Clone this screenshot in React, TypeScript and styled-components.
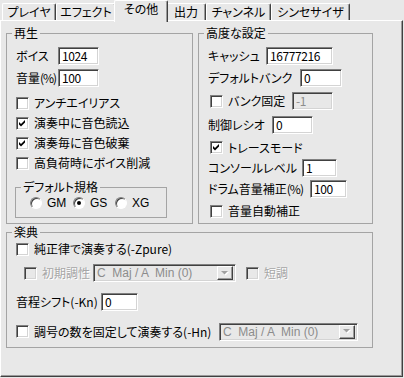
import React from "react";
import styled, { createGlobalStyle } from "styled-components";

const FACE = "#e8e8e8";

const Global = createGlobalStyle`
  html, body { margin: 0; padding: 0; background: ${FACE}; }
  body {
    font-family: "Noto Sans CJK JP", "Noto Sans", sans-serif;
    font-size: 12px;
    line-height: 14px;
    font-feature-settings: "palt";
    color: #000;
  }
`;

const Window = styled.div`
  width: 404px;
  height: 378px;
  background: ${FACE};
  overflow: hidden;
`;

const TabStrip = styled.div`
  display: flex;
  align-items: flex-end;
  height: 20px;
  padding-left: 2px;
`;

const Tab = styled.div<{ $w: number; $active?: boolean }>`
  box-sizing: border-box;
  flex: none;
  width: ${(p) => (p.$active ? p.$w + 4 : p.$w)}px;
  height: ${(p) => (p.$active ? 22 : 17)}px;
  margin: ${(p) => (p.$active ? "0 -2px -2px" : "0")};
  position: ${(p) => (p.$active ? "relative" : "static")};
  z-index: ${(p) => (p.$active ? 1 : "auto")};
  background: ${FACE};
  border: 1px solid #fff;
  border-bottom: none;
  border-right-color: #404040;
  border-radius: 2px 2px 0 0;
  box-shadow: inset -1px 0 #9a9a9a;
  display: flex;
  justify-content: center;
  align-items: flex-start;
  padding-top: 1px;
  white-space: nowrap;
`;

const Panel = styled.div`
  box-sizing: border-box;
  width: 403px;
  height: 357px;
  border: 1px solid #fff;
  border-right-color: #404040;
  border-bottom-color: #404040;
  box-shadow: inset -1px -1px #9a9a9a;
  padding: 5px 0 0 5px;
  display: flex;
  flex-direction: column;
  gap: 1px;
`;

const TopRow = styled.div`
  display: flex;
  gap: 5px;
`;

const Group = styled.fieldset<{ $w: number; $h: number }>`
  box-sizing: border-box;
  flex: none;
  margin: 0;
  min-width: 0;
  width: ${(p) => p.$w}px;
  height: ${(p) => p.$h}px;
  border: 1px solid #a4a4a4;
  padding: 0 8px;
  display: flex;
  flex-direction: column;
`;

const Legend = styled.legend`
  padding: 0 2px;
  margin-left: -3px;
  height: 14px;
  line-height: 14px;
  white-space: nowrap;
`;

const SubGroup = styled(Group)`
  margin-top: 7px;
`;

const Row = styled.div<{ $h: number; $mt?: number }>`
  display: flex;
  align-items: center;
  flex: none;
  height: ${(p) => p.$h}px;
  margin-top: ${(p) => p.$mt ?? 0}px;
`;

const FieldLabel = styled.span<{ $w: number }>`
  flex: none;
  width: ${(p) => p.$w}px;
  white-space: nowrap;
  padding-left: 1px;
  box-sizing: border-box;
`;

const Narrow = styled.span`
  letter-spacing: -1px;
`;

const TextBox = styled.div<{ $w: number; $disabled?: boolean }>`
  box-sizing: border-box;
  flex: none;
  width: ${(p) => p.$w}px;
  height: 18px;
  border: 1px solid;
  border-color: #808080 #fff #fff #808080;
  box-shadow: inset 1px 1px #404040, inset -1px -1px #d4d4d4;
  background: ${(p) => (p.$disabled ? FACE : "#fff")};
  color: ${(p) => (p.$disabled ? "#8c8c8c" : "#000")};
  font-size: 12px;
  letter-spacing: -0.4px;
  line-height: 16px;
  padding-left: 3px;
`;

const CheckLabel = styled.label<{ $ml?: number; $w?: number; $disabled?: boolean }>`
  display: flex;
  align-items: center;
  gap: 5px;
  flex: none;
  margin-left: ${(p) => p.$ml ?? 1}px;
  width: ${(p) => (p.$w ? `${p.$w}px` : "auto")};
  white-space: nowrap;
  color: ${(p) => (p.$disabled ? "#a6a6a6" : "#000")};
  text-shadow: ${(p) => (p.$disabled ? "1px 1px 0 #fff" : "none")};
`;

const Box = styled.span<{ $disabled?: boolean }>`
  box-sizing: border-box;
  flex: none;
  width: 13px;
  height: 13px;
  border: 1px solid;
  border-color: #808080 #fff #fff #808080;
  box-shadow: inset 1px 1px #404040, inset -1px -1px #d4d4d4;
  background: ${(p) => (p.$disabled ? FACE : "#fff")};
  display: flex;
  align-items: center;
  justify-content: center;
`;

const RadioRow = styled.div`
  display: flex;
  align-items: center;
  height: 18px;
  padding-left: 6px;
`;

const RadioItem = styled.label<{ $w?: number }>`
  display: flex;
  align-items: center;
  gap: 5px;
  flex: none;
  width: ${(p) => (p.$w ? `${p.$w}px` : "auto")};
  font-family: "Liberation Sans", Arial, sans-serif;
`;

const RadioDot = styled.span<{ $on?: boolean }>`
  box-sizing: border-box;
  flex: none;
  width: 12px;
  height: 12px;
  border-radius: 50%;
  border: 1px solid;
  border-color: #808080 #fff #fff #808080;
  box-shadow: inset 1px 1px #404040;
  background: #fff;
  display: flex;
  align-items: center;
  justify-content: center;

  &::after {
    content: "";
    width: 4px;
    height: 4px;
    border-radius: 50%;
    background: #000;
    display: ${(p) => (p.$on ? "block" : "none")};
  }
`;

const Combo = styled.div<{ $w: number; $ml?: number }>`
  box-sizing: border-box;
  flex: none;
  width: ${(p) => p.$w}px;
  height: 18px;
  margin-left: ${(p) => p.$ml ?? 0}px;
  border: 1px solid;
  border-color: #808080 #fff #fff #808080;
  box-shadow: inset 1px 1px #404040, inset -1px -1px #d4d4d4;
  background: ${FACE};
  display: flex;
  align-items: center;
  padding: 2px;
  color: #8c8c8c;
  font-family: "Liberation Sans", Arial, sans-serif;
  font-size: 12px;
`;

const ComboText = styled.span`
  flex: 1;
  padding-left: 1px;
  white-space: pre;
  overflow: hidden;
`;

const DropButton = styled.span`
  box-sizing: border-box;
  flex: none;
  width: 16px;
  height: 14px;
  border: 1px solid;
  border-color: #fff #404040 #404040 #fff;
  box-shadow: inset -1px -1px #9a9a9a;
  background: ${FACE};
  display: flex;
  align-items: center;
  justify-content: center;
`;

const Check = () => (
  <svg width="7" height="7" viewBox="0 0 7 7">
    <polygon points="0,2 2,4 6,0 6,2.6 2,6.6 0,4.6" fill="#000" />
  </svg>
);

const Arrow = () => (
  <svg width="8" height="5" viewBox="0 0 8 5">
    <polygon points="1,1 8,1 4.5,4.5" fill="#fff" />
    <polygon points="0,0 7,0 3.5,3.5" fill="#a0a0a0" />
  </svg>
);

const CheckBox: React.FC<{
  text: string;
  checked?: boolean;
  disabled?: boolean;
  ml?: number;
  w?: number;
}> = ({ text, checked, disabled, ml, w }) => (
  <CheckLabel $ml={ml} $w={w} $disabled={disabled}>
    <Box $disabled={disabled}>{checked && <Check />}</Box>
    <span>{text}</span>
  </CheckLabel>
);

const KeyCombo: React.FC<{ w: number; ml?: number }> = ({ w, ml }) => (
  <Combo $w={w} $ml={ml}>
    <ComboText>{"C  Maj / A  Min (0)"}</ComboText>
    <DropButton>
      <Arrow />
    </DropButton>
  </Combo>
);

const tabs = [
  { label: "プレイヤ", w: 54 },
  { label: "エフェクト", w: 60 },
  { label: "その他", w: 50, active: true },
  { label: "出力", w: 40 },
  { label: "チャンネル", w: 65 },
  { label: "シンセサイザ", w: 79 },
];

export default function App() {
  return (
    <Window>
      <Global />
      <TabStrip>
        {tabs.map((t) => (
          <Tab key={t.label} $w={t.w} $active={t.active}>
            {t.label}
          </Tab>
        ))}
      </TabStrip>
      <Panel>
        <TopRow>
          <Group $w={187} $h={198}>
            <Legend>再生</Legend>
            <Row $h={22} $mt={5}>
              <FieldLabel $w={43}>ボイス</FieldLabel>
              <TextBox $w={41}>1024</TextBox>
            </Row>
            <Row $h={21}>
              <FieldLabel $w={43}>
                音量<Narrow>(%)</Narrow>
              </FieldLabel>
              <TextBox $w={41}>100</TextBox>
            </Row>
            <Row $h={20} $mt={5}>
              <CheckBox text="アンチエイリアス" />
            </Row>
            <Row $h={20}>
              <CheckBox text="演奏中に音色読込" checked />
            </Row>
            <Row $h={20}>
              <CheckBox text="演奏毎に音色破棄" checked />
            </Row>
            <Row $h={20}>
              <CheckBox text="高負荷時にボイス削減" />
            </Row>
            <SubGroup $w={152} $h={38}>
              <Legend>デフォルト規格</Legend>
              <RadioRow>
                <RadioItem $w={43}>
                  <RadioDot />
                  GM
                </RadioItem>
                <RadioItem $w={42}>
                  <RadioDot $on />
                  GS
                </RadioItem>
                <RadioItem>
                  <RadioDot />
                  XG
                </RadioItem>
              </RadioRow>
            </SubGroup>
          </Group>

          <Group $w={175} $h={198}>
            <Legend>高度な設定</Legend>
            <Row $h={22} $mt={5}>
              <FieldLabel $w={59}>キャッシュ</FieldLabel>
              <TextBox $w={67}>16777216</TextBox>
            </Row>
            <Row $h={22}>
              <FieldLabel $w={93}>デフォルトバンク</FieldLabel>
              <TextBox $w={42}>0</TextBox>
            </Row>
            <Row $h={24}>
              <CheckBox text="バンク固定" ml={3} w={82} />
              <TextBox $w={41} $disabled>
                -1
              </TextBox>
            </Row>
            <Row $h={24}>
              <FieldLabel $w={65}>制御レシオ</FieldLabel>
              <TextBox $w={41}>0</TextBox>
            </Row>
            <Row $h={21}>
              <CheckBox text="トレースモード" checked ml={3} />
            </Row>
            <Row $h={20}>
              <FieldLabel $w={95}>コンソールレベル</FieldLabel>
              <TextBox $w={35}>1</TextBox>
            </Row>
            <Row $h={22}>
              <FieldLabel $w={103}>
                ドラム音量補正<Narrow>(%)</Narrow>
              </FieldLabel>
              <TextBox $w={37}>100</TextBox>
            </Row>
            <Row $h={22}>
              <CheckBox text="音量自動補正" ml={3} />
            </Row>
          </Group>
        </TopRow>

        <Group $w={367} $h={123}>
          <Legend>楽典</Legend>
          <Row $h={20}>
            <CheckBox text="純正律で演奏する(-Zpure)" />
          </Row>
          <Row $h={28}>
            <CheckBox text="初期調性" disabled ml={9} w={69} />
            <KeyCombo w={143} />
            <CheckBox text="短調" disabled ml={10} />
          </Row>
          <Row $h={30}>
            <FieldLabel $w={86}>音程シフト(-Kn)</FieldLabel>
            <TextBox $w={37}>0</TextBox>
          </Row>
          <Row $h={29}>
            <CheckBox text="調号の数を固定して演奏する(-Hn)" w={203} />
            <KeyCombo w={139} />
          </Row>
        </Group>
      </Panel>
    </Window>
  );
}
